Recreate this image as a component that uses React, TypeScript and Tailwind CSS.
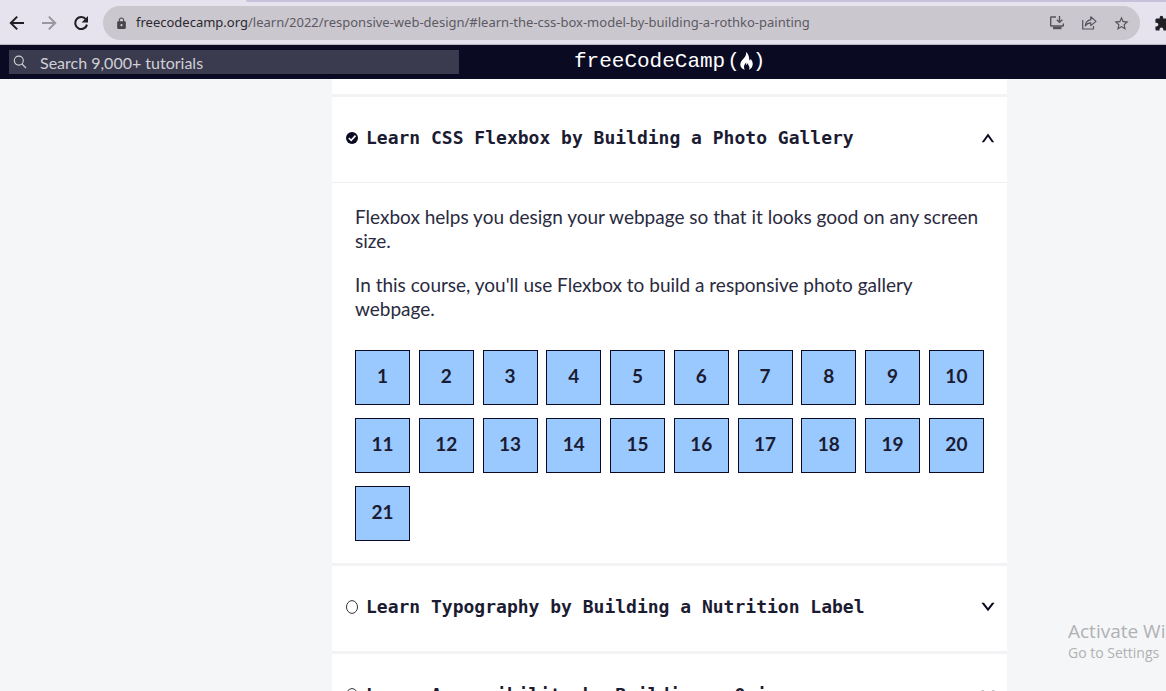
import React, { useState } from "react";
import { MdLock, MdExtension, MdStarBorder } from "react-icons/md";

function ArrowIcon({ forward = false }: { forward?: boolean }) {
  return (
    <svg width="16" height="16" viewBox="0 0 16 16" fill="none" stroke="currentColor" strokeWidth="2" aria-hidden="true">
      {forward ? <path d="M1 8H14M7.8 1.6L14.2 8L7.8 14.4" /> : <path d="M15 8H2M8.2 1.6L1.8 8L8.2 14.4" />}
    </svg>
  );
}

function ReloadIcon() {
  return (
    <svg width="16" height="16" viewBox="0 0 16 16" aria-hidden="true">
      <path d="M13 4.4A6 6 0 1 0 14 9.6" fill="none" stroke="currentColor" strokeWidth="2.1" />
      <path d="M15 1V7.4H8.6Z" fill="currentColor" />
    </svg>
  );
}

function InstallIcon() {
  return (
    <svg width="16" height="16" viewBox="0 0 16 16" fill="none" stroke="#55535a" strokeWidth="1.4" aria-hidden="true">
      <path d="M7 2H2.2Q1.7 2 1.7 2.5V10.5Q1.7 11 2.2 11H13.8Q14.3 11 14.3 10.5V8.5" />
      <path d="M10.5 1V7M7.8 4.8L10.5 7.4L13.4 4.8" />
      <path d="M4 13H12.5" strokeWidth="2.4" />
    </svg>
  );
}

function ShareIcon() {
  return (
    <svg width="16" height="16" viewBox="0 0 16 16" fill="none" stroke="#55535a" strokeWidth="1.2" aria-hidden="true">
      <path d="M1.7 5V14H12.5V11" />
      <path d="M4.2 11Q4.8 5.2 9.8 4.8V1.8L15 6.4L9.8 10.6V7.8Q6.2 7.8 4.2 11Z" strokeLinejoin="round" />
    </svg>
  );
}

function SearchIcon() {
  return (
    <svg width="14" height="14" viewBox="0 0 14 14" fill="none" stroke="#d0d0d5" strokeWidth="1.1" aria-hidden="true">
      <circle cx="5.8" cy="5.6" r="4.5" />
      <path d="M9 9L13 13" />
    </svg>
  );
}

function Flame() {
  return (
    <svg width="13" height="18" viewBox="0 0 13 18" fill="#ffffff" className="mb-0.5 shrink-0" aria-hidden="true">
      <path d="M6 0C8 1.6 8.9 3.6 9 5.8C9.1 7.2 9.5 8.4 10 8.4C10.6 8.4 10.6 7.4 10.4 6.6C12 8.4 13 10.6 12.7 12.8C12.4 15 11.2 16.6 9 17.8C9.6 16.2 9.5 14.9 8.8 13.8C8.3 13 8 12.2 8 11.2C7 11.8 6.8 12.6 6.8 13.4C6.1 12.6 6 11.6 6.3 10.6C4.8 12 4 13.6 4 15C4 16.2 4.3 17 4.8 17.8C2 17 .2 14.8 .3 12.4C.4 10.2 1.8 8.5 3.4 6.8C5.2 4.9 6.6 2.8 6 0Z" />
    </svg>
  );
}

function DoneIcon() {
  return (
    <svg width="12" height="12" viewBox="0 0 12 12" aria-hidden="true">
      <circle cx="6" cy="6" r="6" fill="#0a0a23" />
      <path d="M2.8 6L5.2 8.4L9.5 3.6" fill="none" stroke="#ffffff" strokeWidth="1.6" />
    </svg>
  );
}

function TodoIcon() {
  return (
    <svg width="12" height="14" viewBox="0 0 12 14" fill="none" stroke="#33333f" strokeWidth="1" aria-hidden="true">
      <ellipse cx="6" cy="7" rx="5.5" ry="6.4" />
    </svg>
  );
}

function Chevron({ open }: { open: boolean }) {
  return (
    <svg width="14" height="10" viewBox="0 0 14 10" fill="#0a0a23" aria-hidden="true">
      {open ? <path d="M7 .5L13.2 9.2H10.9L7 3.8L3 9.2H.7Z" /> : <path d="M.4 .8H3L7 5.9L11 .8H13.6L7 9.2Z" />}
    </svg>
  );
}

type CourseProps = { title: string; done?: boolean; initiallyOpen?: boolean; children?: React.ReactNode };

function Course({ title, done = false, initiallyOpen = false, children }: CourseProps) {
  const [open, setOpen] = useState(initiallyOpen);
  return (
    <section className="border-t-3 border-[#f3f3f5] bg-white">
      <h3>
        <button
          type="button"
          aria-expanded={open}
          onClick={() => setOpen(!open)}
          className="flex w-full items-center pt-7 pr-3 pb-8 pl-3.5 text-left font-['DejaVu_Sans_Mono',monospace] text-lg leading-[25px] font-bold whitespace-nowrap text-[#1b1b32]"
        >
          {done ? <DoneIcon /> : <TodoIcon />}
          <span className="ml-2 flex-1">{title}</span>
          <Chevron open={open} />
        </button>
      </h3>
      {open && children}
    </section>
  );
}

const steps = Array.from({ length: 21 }, (_, i) => i + 1);

export default function App() {
  return (
    <div className="relative flex h-screen flex-col overflow-hidden bg-[#f5f6f7] font-['Lato',sans-serif]">
      <div className="border-b border-[#b9b5c2] bg-[#e6e3ee]">
        <div className="ml-[246px] h-0.5 rounded-bl-sm bg-[#c8c1dc]" />
        <div className="flex items-center py-1 pl-[9px]">
          <button type="button" aria-label="Back" className="text-[#1f1f24]"><ArrowIcon /></button>
          <button type="button" aria-label="Forward" className="ml-4 text-[#9a97a1]"><ArrowIcon forward /></button>
          <button type="button" aria-label="Reload" className="ml-4 text-[#1f1f24]"><ReloadIcon /></button>
          <div className="ml-3.5 flex h-[34px] flex-1 items-center rounded-full bg-[#cbc7cf] pr-2.5 pl-3">
            <MdLock size={13} className="text-[#48464d]" />
            <p className="ml-2 flex-1 font-['Noto_Sans',sans-serif] text-[13px] whitespace-nowrap text-[#5c5a62]">
              <span className="text-[#2a292e]">freecodecamp.org</span>/learn/2022/responsive-web-design/#learn-the-css-box-model-by-building-a-rothko-painting
            </p>
            <div className="flex items-center gap-4">
              <button type="button" aria-label="Install"><InstallIcon /></button>
              <button type="button" aria-label="Share"><ShareIcon /></button>
              <button type="button" aria-label="Bookmark" className="text-[#55535a]"><MdStarBorder size={17} /></button>
            </div>
          </div>
          <button type="button" aria-label="Extensions" className="ml-3.5 w-3 overflow-hidden text-[#1f1f24]"><MdExtension size={17} /></button>
        </div>
      </div>

      <header className="flex h-[34px] shrink-0 items-center bg-[#0a0a23] pl-[9px]">
        <label className="flex h-6 w-[450px] items-center bg-[#3b3b4f] pl-1">
          <SearchIcon />
          <input
            type="search"
            aria-label="Search"
            placeholder="Search 9,000+ tutorials"
            className="ml-[13px] min-w-0 flex-1 bg-transparent pt-0.5 text-base text-white outline-none placeholder:text-[#d0d0d5]"
          />
        </label>
        <a href="#home" className="ml-[115px] flex items-center font-['Liberation_Mono',monospace] text-[21px] leading-8 text-white">
          <span className="mr-0.5">freeCodeCamp</span>
          <span>(</span>
          <Flame />
          <span>)</span>
        </a>
      </header>

      <div className="grid grid-cols-[332fr_675fr_159fr]">
        <main className="col-start-2">
          <div className="h-[15px] bg-white" />
          <Course title="Learn CSS Flexbox by Building a Photo Gallery" done initiallyOpen>
            <div className="border-t border-[#f0f0f2] px-[23px] pt-[22px] pb-[22px]">
              <div className="flex flex-col gap-5 text-[19px] leading-6 text-[#2a2a40]">
                <p>Flexbox helps you design your webpage so that it looks good on any screen size.</p>
                <p>In this course, you'll use Flexbox to build a responsive photo gallery webpage.</p>
              </div>
              <ol className="mt-[29px] grid grid-cols-[repeat(10,55px)] justify-between gap-y-[13px]">
                {steps.map((n) => (
                  <li key={n}>
                    <a
                      href={`#step-${n}`}
                      className="flex h-[55px] items-center justify-center border border-[#0a0a23] bg-[#99c9ff] pb-0.5 text-[19px] font-bold text-[#1b1b32]"
                    >
                      {n}
                    </a>
                  </li>
                ))}
              </ol>
            </div>
          </Course>
          <Course title="Learn Typography by Building a Nutrition Label" />
          <Course title="Learn Accessibility by Building a Quiz" />
        </main>
      </div>

      <aside className="absolute right-0 bottom-7 w-[98px] overflow-hidden font-['Open_Sans',sans-serif] whitespace-nowrap text-[#b0b1b4]">
        <p className="text-[19px] leading-6">Activate Wi</p>
        <p className="text-sm leading-5">Go to Settings</p>
      </aside>
    </div>
  );
}
